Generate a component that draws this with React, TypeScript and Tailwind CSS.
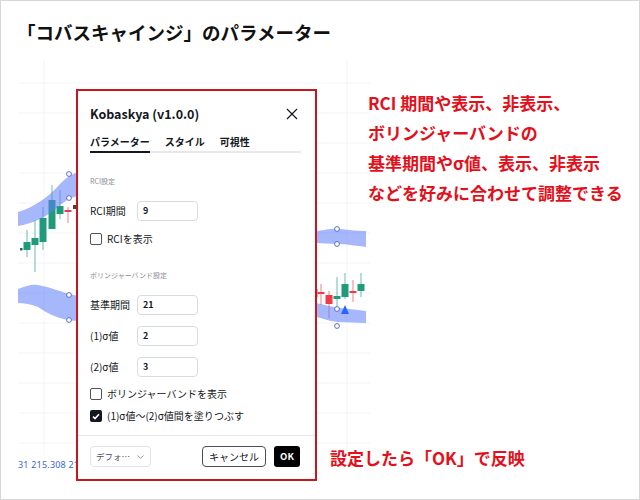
import React from 'react'

interface Candle {
  x: number
  wt: number
  wb: number
  bt: number
  bb: number
  up: boolean
}

const GREEN = '#1f9a7b'
const RED = '#ef3b48'

const candles: Candle[] = [
  { x: 27, wt: 230, wb: 257, bt: 242, bb: 250, up: true },
  { x: 35, wt: 220, wb: 272, bt: 238, bb: 245, up: true },
  { x: 43, wt: 207, wb: 250, bt: 218, bb: 242, up: true },
  { x: 52, wt: 185, wb: 229, bt: 200, bb: 229, up: true },
  { x: 60, wt: 190, wb: 219, bt: 206, bb: 214, up: true },
  { x: 68, wt: 207, wb: 223, bt: 210, bb: 212, up: false },
  { x: 314, wt: 284, wb: 300, bt: 289, bb: 297, up: false },
  { x: 321, wt: 284, wb: 305, bt: 292, bb: 294, up: false },
  { x: 329, wt: 291, wb: 318, bt: 295, bb: 304, up: false },
  { x: 337, wt: 277, wb: 310, bt: 296, bb: 299, up: true },
  { x: 345, wt: 273, wb: 299, bt: 284, bb: 297, up: true },
  { x: 353, wt: 280, wb: 302, bt: 291, bb: 293, up: false },
  { x: 361, wt: 273, wb: 297, bt: 284, bb: 291, up: true },
]

const markers = [
  [69, 174],
  [69, 198],
  [69, 295],
  [69, 320],
  [337, 229],
  [337, 244],
  [337, 309],
  [337, 326],
]

const Chart = () => (
  <svg
    className="absolute left-0 top-0 w-[638px] h-[415px]"
    viewBox="1 60 638 415"
  >
    {Array.from({ length: 13 }).map((_, i) => (
      <line
        key={i}
        x1={18}
        x2={370}
        y1={83 + i * 30}
        y2={83 + i * 30}
        stroke="#f2f4f7"
        strokeWidth={1}
      />
    ))}
    <line x1={44} x2={44} y1={60} y2={455} stroke="#f2f4f7" />
    <line x1={347} x2={347} y1={60} y2={455} stroke="#f2f4f7" />

    <rect x={20} y={248} width={2.5} height={2.5} fill="#1b6e5a" />

    {candles.map((c) => {
      const col = c.up ? GREEN : RED
      return (
        <g key={c.x}>
          <line
            x1={c.x}
            x2={c.x}
            y1={c.wt}
            y2={c.wb}
            stroke={col}
            strokeOpacity={0.55}
            strokeWidth={1.2}
          />
          <rect
            x={c.x - 3.5}
            y={c.bt}
            width={7}
            height={Math.max(c.bb - c.bt, 1.5)}
            fill={col}
          />
        </g>
      )
    })}
    <rect x={73} y={205} width={5} height={4} fill="#5b3b2e" />

    <g fill="#5c7cfa" fillOpacity={0.55}>
      <path d="M18 212 C32 208 48 198 60 184 C66 178 70 175 78 172 L78 196 C72 197 66 200 58 207 C46 217 32 224 18 226 Z" />
      <path d="M18 289 C26 286 32 284 38 285 C50 287 60 292 78 296 L78 321 C60 320 48 314 38 307 C30 304 24 303 18 303 Z" />
      <path d="M316 231 C326 230 332 228 340 229 C350 230 358 231 366 231 L366 247 C356 246 348 244 338 244 C330 244 324 243 316 243 Z" />
      <path d="M316 303 C326 305 332 307 340 308 C350 309 358 310 366 311 L366 323 C356 323 348 322 338 322 C328 321 322 318 316 317 Z" />
    </g>

    <polygon points="345,305 341,314 349,314" fill="#2962ff" />

    {markers.map(([x, y]) => (
      <circle
        key={`${x}-${y}`}
        cx={x}
        cy={y}
        r={2.4}
        fill="#fff"
        stroke="#5a6fc8"
        strokeWidth={1}
      />
    ))}

    <text
      x={18}
      y={468}
      fontSize={9}
      fill="#3b67d2"
      fontFamily="Noto Sans, sans-serif"
      letterSpacing={0.2}
    >
      31 215.308 215
    </text>
  </svg>
)

const Field = ({ label, value }: { label: string; value: string }) => (
  <div className="flex items-center h-[20px]">
    <span className="w-[47px] text-[10px] leading-[14px] text-[#131722]">
      {label}
    </span>
    <div className="w-[61px] h-[20px] rounded-[4px] border border-[#d9dbe2] pl-[5px] flex items-center text-[9px] font-semibold text-[#131722]">
      {value}
    </div>
  </div>
)

const Check = ({ checked, label }: { checked?: boolean; label: string }) => (
  <div className="flex items-center gap-[5px] h-[12px]">
    {checked ? (
      <span className="w-[12px] h-[12px] rounded-[2px] bg-[#131722] flex items-center justify-center">
        <svg width="8" height="7" viewBox="0 0 8 7">
          <path
            d="M1 3.6 L3 5.5 L7 1.2"
            fill="none"
            stroke="#fff"
            strokeWidth={1.6}
          />
        </svg>
      </span>
    ) : (
      <span className="w-[12px] h-[12px] rounded-[2px] border-[1.5px] border-[#50535e]" />
    )}
    <span className="text-[10px] leading-[12px] text-[#131722]">{label}</span>
  </div>
)

const Dialog = () => (
  <div className="relative ml-[75px] mt-[29px] w-[241px] h-[392px] shrink-0 border-2 border-[#c8161e] bg-white flex flex-col">
    <div className="pt-[13px] pl-[12px] pr-[17px] flex items-center justify-between">
      <span className="text-[12.5px] leading-[20px] font-semibold text-[#131722]">
        Kobaskya (v1.0.0)
      </span>
      <svg width="12" height="12" viewBox="0 0 12 12">
        <path
          d="M1 1 L11 11 M11 1 L1 11"
          stroke="#131722"
          strokeWidth={1.2}
        />
      </svg>
    </div>

    <div className="mt-[10px] ml-[12px] mr-[14px] flex gap-[15px] border-b-2 border-[#e6e8ee]">
      <span className="pb-[1px] -mb-[2px] border-b-2 border-[#131722] text-[10px] leading-[16px] font-bold text-[#131722]">
        パラメーター
      </span>
      <span className="pb-[1px] text-[10px] leading-[16px] font-bold text-[#131722]">
        スタイル
      </span>
      <span className="pb-[1px] text-[10px] leading-[16px] font-bold text-[#131722]">
        可視性
      </span>
    </div>

    <div className="pl-[12px] flex flex-col">
      <span className="mt-[23px] text-[7px] leading-[10px] text-[#8a8d96]">
        RCI設定
      </span>
      <div className="mt-[15px]">
        <Field label="RCI期間" value="9" />
      </div>
      <div className="mt-[12px]">
        <Check label="RCIを表示" />
      </div>
      <span className="mt-[25px] text-[7px] leading-[10px] text-[#8a8d96]">
        ボリンジャーバンド設定
      </span>
      <div className="mt-[15px] flex flex-col gap-[11px]">
        <Field label="基準期間" value="21" />
        <Field label="(1)σ値" value="2" />
        <Field label="(2)σ値" value="3" />
      </div>
      <div className="mt-[11px] flex flex-col gap-[10px]">
        <Check label="ボリンジャーバンドを表示" />
        <Check checked label="(1)σ値〜(2)σ値間を塗りつぶす" />
      </div>
    </div>

    <div className="mt-[13px] border-t border-[#e6e8ee]" />

    <div className="mt-[10px] pl-[12px] pr-[15px] flex items-center">
      <div className="w-[61px] h-[21px] rounded-[4px] border border-[#e0e3eb] flex items-center pl-[5px] pr-[6px] justify-between">
        <span className="text-[8.5px] text-[#50535e]">デフォ…</span>
        <svg width="7" height="4" viewBox="0 0 7 4">
          <path d="M0.5 0.5 L3.5 3.3 L6.5 0.5" fill="none" stroke="#9598a1" strokeWidth={1} />
        </svg>
      </div>
      <div className="ml-auto w-[64px] h-[21px] rounded-[4px] border border-[#4a4d57] flex items-center justify-center text-[10px] text-[#131722]">
        キャンセル
      </div>
      <div className="ml-[8px] w-[26px] h-[21px] rounded-[3px] bg-black flex items-center justify-center text-[9.5px] font-bold text-white">
        OK
      </div>
    </div>
  </div>
)

export default function App() {
  return (
    <div className="w-[640px] h-[500px] border border-[#d6d6d6] bg-white overflow-hidden font-['Noto_Sans_CJK_JP',sans-serif]">
      <h1 className="pl-[16px] pt-[18px] text-[18.5px] leading-[26px] font-bold text-[#111]">
        「コバスキャインジ」のパラメーター
      </h1>
      <div className="relative mt-[15px] h-[415px] flex">
        <Chart />
        <Dialog />
        <div className="relative ml-[13px] flex flex-col text-[17px] leading-[30px] font-bold text-[#e3101c]">
          <div className="mt-[28px] pl-[38px] whitespace-nowrap">
            <p>RCI 期間や表示、非表示、</p>
            <p>ボリンジャーバンドの</p>
            <p>基準期間やσ値、表示、非表示</p>
            <p>などを好みに合わせて調整できる</p>
          </div>
          <p className="mt-[235px] whitespace-nowrap">設定したら「OK」で反映</p>
        </div>
      </div>
    </div>
  )
}
